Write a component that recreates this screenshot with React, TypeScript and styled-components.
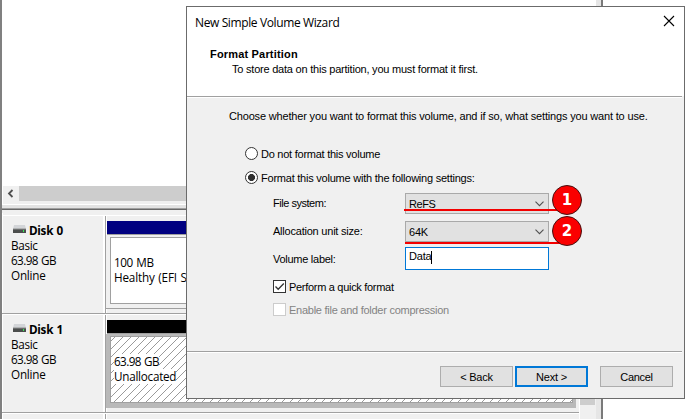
import React from "react";
import styled, { createGlobalStyle } from "styled-components";

const Global = createGlobalStyle`
  * { box-sizing: border-box; }
  body { margin: 0; background: #fff; overflow: hidden; }
  svg { display: block; }
`;

const segoe = `"Open Sans", "Noto Sans", sans-serif`;
const shell = `"Liberation Sans", Arial, sans-serif`;

const Page = styled.div`
  position: relative;
  width: 692px;
  height: 419px;
  overflow: hidden;
  background: #fff;
`;

/* ---------- disk management window ---------- */

const Manager = styled.div`
  display: flex;
  flex-direction: column;
  width: 603px;
  height: 419px;
  border-left: 2px solid #808080;
  border-right: 2px solid #7a7a7a;
  box-shadow: inset 1px 0 0 #fff, inset -5px 0 0 #e6e6e6;
  background: #f0f0f0;
  font: 11.7px/15px ${segoe};
  color: #000;
`;

const VolumeList = styled.div`
  height: 186px;
  flex: none;
  margin-right: 5px;
  background: #fff;
`;

const ScrollRow = styled.div`
  display: flex;
  height: 15px;
  flex: none;
  margin-right: 5px;
`;

const ScrollButton = styled.div`
  width: 17px;
  padding: 3px 0 0 5px;
`;

const Thumb = styled.div`
  flex: 1;
  background: #cdcdcd;
`;

const Splitter = styled.div`
  height: 9px;
  flex: none;
  margin: 3px 0 2px;
  border-top: 1px solid #fff;
  background: linear-gradient(#e3e3e3 0 3px, #a0a0a0 3px 4px, #696969 4px 5px, #f0f0f0 5px);
`;

const DiskArea = styled.div`
  display: flex;
  flex: 1;
  min-height: 0;
`;

const DiskRows = styled.div`
  width: 577px;
  overflow: hidden;
`;

const DiskRow = styled.div`
  display: flex;
  height: 99px;
  border-top: 1px solid #fff;
  border-bottom: 1px solid #a0a0a0;
`;

const DiskHeader = styled.div`
  width: 103px;
  flex: none;
  padding: 7px 0 0 8px;
  border-left: 1px solid #fff;
  border-right: 2px solid #fff;
`;

const DiskTitle = styled.div`
  display: flex;
  align-items: center;
  gap: 3px;
  height: 15px;
  margin-left: 2px;
  font-weight: 700;
`;

const DiskIcon = styled.svg`
  width: 13px;
  height: 8px;
  margin-top: -4px;
`;

const Segoe = styled.div<{ $spacing?: number }>`
  letter-spacing: ${(p) => p.$spacing ?? -0.3}px;
  word-spacing: 0.8px;
  white-space: nowrap;
`;

const Track = styled.div`
  flex: 1;
  padding: 5px 3px 0 0;
  border-left: 1px solid #a0a0a0;
  box-shadow: inset 1px 0 0 #fff;
`;

const Strip = styled.div<{ $color: string }>`
  height: 14px;
  margin-left: 1px;
  background: ${(p) => p.$color};
  border-bottom: 1px solid #a0a0a0;
`;

const Frame = styled.div<{ $selected?: boolean }>`
  height: 74px;
  padding: 2px 3px 5px 4px;
  background: ${(p) => (p.$selected ? "#b9b9b9" : "#f0f0f0")};
  border-bottom: 1px solid ${(p) => (p.$selected ? "#b9b9b9" : "#a0a0a0")};
`;

const Partition = styled.div`
  position: relative;
  height: 67px;
  padding: 17px 0 0 3px;
  border: 1px solid #a0a0a0;
  background: #fff;
`;

const Hatch = styled.svg`
  position: absolute;
  inset: 0;
  width: 100%;
  height: 100%;
`;

const PartitionLabel = styled.div`
  position: relative;
  width: max-content;
  background: #fff;
`;

const VerticalScroll = styled.div`
  width: 16px;
  border-left: 1px solid #fff;
`;

const VerticalThumb = styled.div`
  height: 190px;
  background: #cdcdcd;
`;

/* ---------- wizard dialog ---------- */

const Dialog = styled.div`
  position: absolute;
  left: 186px;
  top: 6px;
  display: flex;
  flex-direction: column;
  width: 499px;
  height: 393px;
  border: 1px solid #6b6b6b;
  background: #f0f0f0;
  font: 11px/15px ${shell};
  color: #000;
`;

const DialogTop = styled.div`
  height: 89px;
  flex: none;
  background: #fff;
`;

const TitleBar = styled.div`
  display: flex;
  justify-content: space-between;
  height: 40px;
  padding: 8px 9px 0 8px;
  font: 12px/15px ${segoe};
`;

const Heading = styled.div`
  padding-left: 23px;
  font-weight: 700;
  letter-spacing: 0.18px;
`;

const Subheading = styled.div`
  padding-left: 45px;
`;

const Rule = styled.div`
  height: 2px;
  flex: none;
  margin-right: 2px;
  background: linear-gradient(#a0a0a0 0 1px, #fff 1px 2px);
`;

const DialogBody = styled.div`
  height: 253px;
  flex: none;
  padding-top: 11px;
`;

const Text = styled.span<{ $spacing: number }>`
  letter-spacing: ${(p) => p.$spacing}px;
  white-space: nowrap;
`;

const Intro = styled.div`
  padding-left: 42px;
  height: 32px;
`;

const RadioRow = styled.div`
  display: flex;
  align-items: center;
  gap: 3px;
  height: 24px;
  padding-left: 58px;

  ${Text} {
    padding-top: 2px;
  }
`;

const RadioMark = styled.span<{ $checked?: boolean }>`
  width: 13px;
  height: 13px;
  border: 1px solid #333;
  border-radius: 50%;
  background: ${(p) => (p.$checked ? "radial-gradient(circle, #303030 0 3.2px, #fff 3.8px)" : "#fff")};
`;

const Fields = styled.div`
  display: grid;
  grid-template-columns: 132px 144px;
  grid-template-rows: 21px 21px 23px;
  row-gap: 7px;
  margin: 4px 0 3px 86px;
`;

const FieldLabel = styled.label`
  padding-top: 3px;
`;

const Select = styled.div`
  display: flex;
  align-items: center;
  justify-content: space-between;
  padding: 1px 4px 0 3px;
  border: 1px solid #a9a9a9;
  background: #e1e1e1;
`;

const Input = styled.div`
  display: flex;
  margin-top: -2px;
  height: 23px;
  padding: 1px 3px;
  border: 1px solid #0078d7;
  background: #fff;
`;

const Caret = styled.span`
  width: 1px;
  height: 13px;
  margin-top: 2px;
  background: #000;
`;

const CheckRow = styled.div<{ $disabled?: boolean }>`
  display: flex;
  align-items: center;
  gap: 3px;
  height: 23px;
  margin-left: 86px;
  color: ${(p) => (p.$disabled ? "#838383" : "#000")};

  ${Text} {
    padding-top: 1px;
  }
`;

const CheckBox = styled.span<{ $disabled?: boolean }>`
  display: flex;
  width: 13px;
  height: 13px;
  border: 1px solid ${(p) => (p.$disabled ? "#ccc" : "#333")};
  background: #fff;
`;

const Footer = styled.div`
  display: flex;
  padding: 13px 0 0 253px;
`;

const Button = styled.button<{ $primary?: boolean; $left?: number }>`
  width: 73px;
  height: 21px;
  margin: 0 0 0 ${(p) => p.$left ?? 0}px;
  padding: 2px 0 0;
  border: ${(p) => (p.$primary ? "2px solid #0078d7" : "1px solid #adadad")};
  background: #e1e1e1;
  color: #000;
  font: 11px/15px ${shell};
`;

/* ---------- callouts laid over the dialog ---------- */

const Underline = styled.div<{ $x: number; $y: number }>`
  position: absolute;
  left: ${(p) => p.$x}px;
  top: ${(p) => p.$y}px;
  width: 160px;
  height: 2px;
  background: #f30000;
`;

const Callout = styled.div<{ $y: number }>`
  position: absolute;
  left: 552px;
  top: ${(p) => p.$y}px;
  width: 30px;
  height: 30px;
  border: 1px solid #461010;
  border-radius: 50%;
  background: #fa0000;
  color: #fff;
  font: 700 15px/28px "DejaVu Sans", sans-serif;
  text-align: center;
`;

const Drive = () => (
  <DiskIcon viewBox="0 0 13 8">
    <path d="M1 0h11l1 4H0z" fill="#d3d5d8" />
    <path d="M0 4h13v4H0z" fill="#4b4d4c" />
    <path d="M0 4h13" stroke="#8d8f8f" />
    <path d="M10 5h1v2h-1z" fill="#35ed55" />
  </DiskIcon>
);

const Chevron = () => (
  <svg width="9" height="6" viewBox="0 0 9 6" fill="none" stroke="#505050" strokeWidth="1.1">
    <path d="M.5.7l4 4 4-4" />
  </svg>
);

const DiskInfo = ({ name }: { name: string }) => (
  <DiskHeader>
    <DiskTitle>
      <Drive />
      <Segoe>{name}</Segoe>
    </DiskTitle>
    <Segoe>Basic</Segoe>
    <Segoe $spacing={-0.6}>63.98 GB</Segoe>
    <Segoe $spacing={-0.2}>Online</Segoe>
  </DiskHeader>
);

export default function App() {
  return (
    <Page>
      <Global />
      <Manager>
        <VolumeList />
        <ScrollRow>
          <ScrollButton>
            <svg width="8" height="9" viewBox="0 0 8 9" fill="none" stroke="#505050" strokeWidth="1.8">
              <path d="M5.5 1L2 4.5 5.5 8" />
            </svg>
          </ScrollButton>
          <Thumb />
        </ScrollRow>
        <Splitter />
        <DiskArea>
          <DiskRows>
            <DiskRow>
              <DiskInfo name="Disk 0" />
              <Track>
                <Strip $color="#000080" />
                <Frame>
                  <Partition>
                    <Segoe $spacing={-0.4}>100 MB</Segoe>
                    <Segoe $spacing={-0.17}>Healthy (EFI System Partition)</Segoe>
                  </Partition>
                </Frame>
              </Track>
            </DiskRow>
            <DiskRow>
              <DiskInfo name="Disk 1" />
              <Track>
                <Strip $color="#000" />
                <Frame $selected>
                  <Partition>
                    <Hatch>
                      <defs>
                        <pattern
                          id="hatch"
                          width="8"
                          height="8"
                          patternUnits="userSpaceOnUse"
                          patternTransform="translate(4 0)"
                        >
                          <path d="M-1 9L9-1" stroke="#808080" strokeWidth=".8" />
                        </pattern>
                      </defs>
                      <rect width="100%" height="100%" fill="url(#hatch)" />
                    </Hatch>
                    <PartitionLabel>
                      <Segoe $spacing={-0.6}>63.98 GB</Segoe>
                    </PartitionLabel>
                    <PartitionLabel>
                      <Segoe $spacing={-0.26}>Unallocated</Segoe>
                    </PartitionLabel>
                  </Partition>
                </Frame>
              </Track>
            </DiskRow>
            <DiskRow>
              <DiskHeader>
                <DiskTitle>
                  <Drive />
                </DiskTitle>
              </DiskHeader>
              <Track />
            </DiskRow>
          </DiskRows>
          <VerticalScroll>
            <VerticalThumb />
          </VerticalScroll>
        </DiskArea>
      </Manager>

      <Dialog>
        <DialogTop>
          <TitleBar>
            <Text $spacing={-0.38}>New Simple Volume Wizard</Text>
            <svg width="12" height="12" viewBox="0 0 12 12" stroke="#000" strokeWidth="1.1">
              <path d="M1 1l10 10M11 1L1 11" />
            </svg>
          </TitleBar>
          <Heading>Format Partition</Heading>
          <Subheading>
            <Text $spacing={-0.22}>To store data on this partition, you must format it first.</Text>
          </Subheading>
        </DialogTop>
        <Rule />
        <DialogBody>
          <Intro>
            <Text $spacing={-0.17}>
              Choose whether you want to format this volume, and if so, what settings you want to use.
            </Text>
          </Intro>
          <RadioRow>
            <RadioMark />
            <Text $spacing={-0.25}>Do not format this volume</Text>
          </RadioRow>
          <RadioRow>
            <RadioMark $checked />
            <Text $spacing={-0.23}>Format this volume with the following settings:</Text>
          </RadioRow>
          <Fields>
            <FieldLabel>
              <Text $spacing={-0.47}>File system:</Text>
            </FieldLabel>
            <Select>
              <Text $spacing={-0.4}>ReFS</Text>
              <Chevron />
            </Select>
            <FieldLabel>
              <Text $spacing={-0.22}>Allocation unit size:</Text>
            </FieldLabel>
            <Select>
              <Text $spacing={-0.2}>64K</Text>
              <Chevron />
            </Select>
            <FieldLabel>
              <Text $spacing={-0.27}>Volume label:</Text>
            </FieldLabel>
            <Input>
              <Text $spacing={-0.2}>Data</Text>
              <Caret />
            </Input>
          </Fields>
          <CheckRow>
            <CheckBox>
              <svg width="11" height="11" viewBox="0 0 11 11" fill="none" stroke="#333" strokeWidth="1.3">
                <path d="M1.5 5.5l2.7 2.8L9.8 2.5" />
              </svg>
            </CheckBox>
            <Text $spacing={-0.3}>Perform a quick format</Text>
          </CheckRow>
          <CheckRow $disabled>
            <CheckBox $disabled />
            <Text $spacing={-0.26}>Enable file and folder compression</Text>
          </CheckRow>
        </DialogBody>
        <Rule />
        <Footer>
          <Button>
            <Text $spacing={-0.2}>&lt; Back</Text>
          </Button>
          <Button $primary $left={2}>
            <Text $spacing={-0.2}>Next &gt;</Text>
          </Button>
          <Button $left={12}>
            <Text $spacing={-0.3}>Cancel</Text>
          </Button>
        </Footer>
      </Dialog>

      <Underline $x={404} $y={209} />
      <Underline $x={405} $y={242} />
      <Callout $y={185}>1</Callout>
      <Callout $y={216}>2</Callout>
    </Page>
  );
}
